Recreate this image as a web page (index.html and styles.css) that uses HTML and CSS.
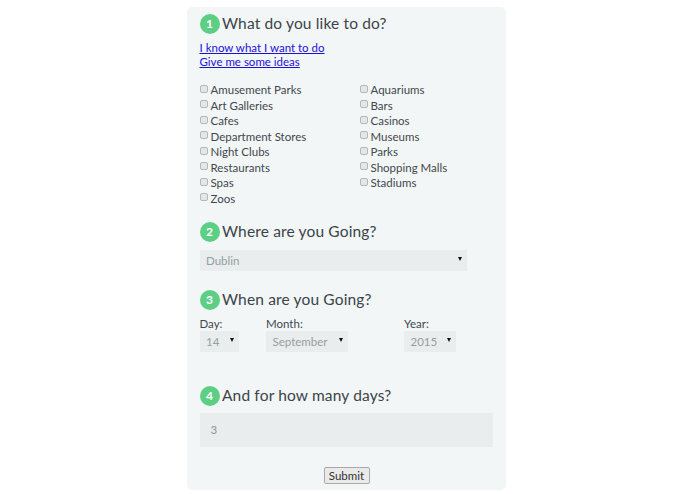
FILE: index.html
```html
<!DOCTYPE html>
<html lang="en">
<head>
<meta charset="utf-8">
<title>Trip planner</title>
<link rel="stylesheet" href="styles.css">
</head>
<body>
<form class="panel">
  <section class="step step-one">
    <h2 class="step-title"><span class="num">1</span>What do you like to do?</h2>
    <div class="links">
      <a href="#">I know what I want to do</a>
      <a href="#">Give me some ideas</a>
    </div>
    <div class="checks">
      <label class="check"><input type="checkbox"><span>Amusement Parks</span></label>
      <label class="check"><input type="checkbox"><span>Aquariums</span></label>
      <label class="check"><input type="checkbox"><span>Art Galleries</span></label>
      <label class="check"><input type="checkbox"><span>Bars</span></label>
      <label class="check"><input type="checkbox"><span>Cafes</span></label>
      <label class="check"><input type="checkbox"><span>Casinos</span></label>
      <label class="check"><input type="checkbox"><span>Department Stores</span></label>
      <label class="check"><input type="checkbox"><span>Museums</span></label>
      <label class="check"><input type="checkbox"><span>Night Clubs</span></label>
      <label class="check"><input type="checkbox"><span>Parks</span></label>
      <label class="check"><input type="checkbox"><span>Restaurants</span></label>
      <label class="check"><input type="checkbox"><span>Shopping Malls</span></label>
      <label class="check"><input type="checkbox"><span>Spas</span></label>
      <label class="check"><input type="checkbox"><span>Stadiums</span></label>
      <label class="check"><input type="checkbox"><span>Zoos</span></label>
    </div>
  </section>
  <section class="step step-two">
    <h2 class="step-title"><span class="num">2</span>Where are you Going?</h2>
    <div class="fake-select city"><span>Dublin</span><i class="arrow"></i></div>
  </section>
  <section class="step step-three">
    <h2 class="step-title"><span class="num">3</span>When are you Going?</h2>
    <div class="dates">
      <div class="date date-day"><div class="date-label">Day:</div><div class="fake-select"><span>14</span><i class="arrow"></i></div></div>
      <div class="date date-month"><div class="date-label">Month:</div><div class="fake-select"><span>September</span><i class="arrow"></i></div></div>
      <div class="date date-year"><div class="date-label">Year:</div><div class="fake-select"><span>2015</span><i class="arrow"></i></div></div>
    </div>
  </section>
  <section class="step step-four">
    <h2 class="step-title"><span class="num">4</span>And for how many days?</h2>
    <input class="days" type="text" value="3">
  </section>
  <div class="actions"><button class="submit" type="button">Submit</button></div>
</form>
</body>
</html>
```
FILE: styles.css
```css
* { box-sizing: border-box; }
html, body { margin: 0; padding: 0; background: #fff; }
body {
  font-family: Lato, "Open Sans", "Liberation Sans", sans-serif;
  color: #3f4a4f;
  height: 494px;
  overflow: hidden;
  padding-top: 7px;
}
.panel {
  width: 319px;
  height: 483px;
  margin-left: 187px;
  padding: 7px 12.5px 0;
  background: #f3f6f7;
  border-radius: 5px;
}
.step-title {
  display: flex;
  align-items: flex-start;
  margin: 0;
  height: 20px;
  font-size: 15.5px;
  font-weight: 400;
  line-height: 18px;
  letter-spacing: 0.15px;
  color: #3a4449;
}
.num {
  flex: none;
  width: 20px;
  height: 20px;
  margin-right: 2.5px;
  border-radius: 50%;
  background: #5dcf85;
  color: #fff;
  font-size: 12px;
  font-weight: 700;
  line-height: 20px;
  text-align: center;
  letter-spacing: 0;
}
.links {
  display: flex;
  flex-direction: column;
  align-items: flex-start;
  margin-top: 7px;
  font-size: 11.5px;
  line-height: 14px;
}
.links a { color: #1a10d8; }
.checks {
  display: grid;
  grid-template-columns: 160px 1fr;
  grid-auto-rows: 15.5px;
  margin-top: 13px;
}
.check {
  display: flex;
  align-items: center;
  font-size: 11.5px;
  color: #3f484d;
}
.check input {
  appearance: none;
  width: 8px;
  height: 8px;
  margin: -2px 3px 0 0;
  flex: none;
  background: #e4e7e8;
  border: 1px solid #b5b8ba;
  border-radius: 2px;
}
.step-two { margin-top: 15.5px; }
.fake-select {
  display: flex;
  align-items: center;
  justify-content: space-between;
  height: 21px;
  padding: 0 5px 0 6.5px;
  background: #e9edee;
  color: #969ea1;
  font-size: 11.5px;
}
.city { width: 267.5px; margin-top: 8px; }
.arrow {
  width: 0;
  height: 0;
  margin-top: -2px;
  border-left: 2.5px solid transparent;
  border-right: 2.5px solid transparent;
  border-top: 4.5px solid #111;
}
.step-three { margin-top: 19px; }
.dates { display: flex; margin-top: 6px; }
.date-label { font-size: 11.5px; line-height: 15px; color: #3f484d; }
.date-day { width: 66.5px; }
.date-day .fake-select { width: 39px; }
.date-month { width: 138px; }
.date-month .fake-select { width: 82px; }
.date-year .fake-select { width: 52px; }
.step-four { margin-top: 34px; }
.days {
  display: block;
  width: 293.5px;
  height: 34px;
  margin-top: 7px;
  padding: 0 11px;
  border: 0;
  background: #e9edee;
  color: #8b9497;
  font: 11.5px Lato, "Open Sans", "Liberation Sans", sans-serif;
}
.actions { display: flex; justify-content: center; margin-top: 20px; }
.submit {
  width: 46px;
  height: 17px;
  padding: 0;
  font: 11.5px Lato, "Open Sans", "Liberation Sans", sans-serif;
  color: #333;
  background: #eaeaea;
  border: 1px solid #a9a9a9;
  border-radius: 2px;
}
```
